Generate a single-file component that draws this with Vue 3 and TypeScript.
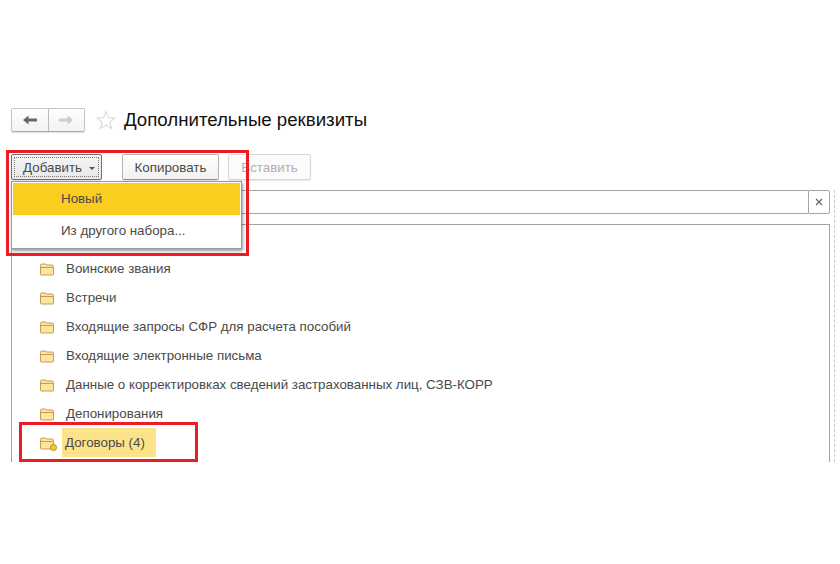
<script setup lang="ts">
const rows: string[] = [
  'Воинские звания',
  'Встречи',
  'Входящие запросы СФР для расчета пособий',
  'Входящие электронные письма',
  'Данные о корректировках сведений застрахованных лиц, СЗВ-КОРР',
  'Депонирования',
]
</script>

<template>
  <div class="page">
    <header class="head">
      <div class="nav">
        <button class="nav-btn">
          <svg width="16" height="12" viewBox="0 0 16 12"><path d="M1 6 L6.500 1.500 V4.500 H15 V7.500 H6.500 V10.500 Z" fill="#666" /></svg>
        </button>
        <button class="nav-btn off">
          <svg width="16" height="12" viewBox="0 0 16 12"><path d="M15 6 L9.500 1.500 V4.500 H1 V7.500 H9.500 V10.500 Z" fill="#ccc" /></svg>
        </button>
      </div>
      <svg class="star" width="20" height="20" viewBox="0 0 20 20">
        <path d="M10 1.500 L12.400 7.600 L18.900 8 L13.900 12.200 L15.500 18.500 L10 15 L4.500 18.500 L6.100 12.200 L1.100 8 L7.600 7.600 Z" fill="#fff" stroke="#dcdcdc" stroke-width="1.2" />
      </svg>
      <h1 class="title">Дополнительные реквизиты</h1>
    </header>

    <div class="toolbar">
      <div class="add-wrap">
        <button class="btn add"><span class="focus">Добавить<i class="caret"></i></span></button>
        <div class="menu">
          <div class="menu-item active">Новый</div>
          <div class="menu-item">Из другого набора...</div>
        </div>
      </div>
      <button class="btn copy">Копировать</button>
      <button class="btn paste">Вставить</button>
    </div>

    <div class="body">
      <div class="search">
        <div class="search-input"></div>
        <div class="search-clear">
          <svg width="8" height="8" viewBox="0 0 8 8"><path d="M1 1 L7 7 M7 1 L1 7" stroke="#666" stroke-width="1.2" /></svg>
        </div>
      </div>
      <div class="table">
        <div v-for="r in rows" :key="r" class="row">
          <svg class="folder" width="16" height="13" viewBox="0 0 16 13">
            <path d="M1.500 11 V2.500 Q1.500 1 3 1 H6 Q7 1 7.500 2 H13 Q14.500 2 14.500 3.500 V11 Q14.500 12 13.500 12 H2.500 Q1.500 12 1.500 11 Z" fill="#fce59c" stroke="#c9985a" />
            <path d="M2 4.500 H14" stroke="#c9985a" />
          </svg>
          <span class="label">{{ r }}</span>
        </div>
        <div class="row">
          <span class="folder-wrap">
            <svg class="folder" width="16" height="13" viewBox="0 0 16 13">
              <path d="M1.500 11 V2.500 Q1.500 1 3 1 H6 Q7 1 7.500 2 H13 Q14.500 2 14.500 3.500 V11 Q14.500 12 13.500 12 H2.500 Q1.500 12 1.500 11 Z" fill="#fce59c" stroke="#c9985a" />
              <path d="M2 4.500 H14" stroke="#c9985a" />
            </svg>
            <i class="dot"></i>
          </span>
          <span class="label hit">Договоры (4)</span>
        </div>
      </div>
    </div>

    <div class="mark mark-top"></div>
    <div class="mark mark-bottom"></div>
  </div>
</template>

<style>
html, body { margin: 0; background: #fff; }
</style>

<style scoped>
.page {
  position: relative;
  width: 840px;
  height: 564px;
  overflow: hidden;
  box-sizing: border-box;
  padding: 108px 0 0 11px;
  background: #fff;
  font-family: "Liberation Sans", Arial, sans-serif;
  font-size: 13.33px;
  color: #4a4a4a;
}
.head { display: flex; align-items: center; height: 24px; }
.nav {
  display: flex;
  width: 74px;
  height: 24px;
  box-sizing: border-box;
  border: 1px solid #c4c4c4;
  border-bottom-color: #aaa;
  border-radius: 2px;
  background: linear-gradient(#fff, #f2f2f2);
  box-shadow: 0 1px 1px rgba(0, 0, 0, 0.12);
}
.nav-btn {
  flex: 1;
  padding: 0;
  border: 0;
  background: none;
  display: flex;
  align-items: center;
  justify-content: center;
}
.nav-btn.off { border-left: 1px solid #bbb; }
.star { margin: 0 8px 0 11px; flex: none; }
.title { margin: 0; font-size: 18.67px; font-weight: 400; color: #111; line-height: 24px; }
.toolbar { display: flex; margin-top: 22px; height: 26px; }
.btn {
  height: 26px;
  box-sizing: border-box;
  padding: 0;
  border: 1px solid #b4b4b4;
  border-bottom-color: #8f8f8f;
  border-radius: 2px;
  background: linear-gradient(#fff, #f1f1f1);
  box-shadow: 0 1px 1px rgba(0, 0, 0, 0.1);
  font: 13.33px "Liberation Sans", Arial, sans-serif;
  color: #4a4a4a;
}
.add-wrap { position: relative; width: 91px; }
.add { width: 91px; border-color: #6f6f6f; display: block; padding: 2px; background: linear-gradient(#f4f4f4, #e8e8e8); }
.focus {
  display: flex;
  align-items: center;
  justify-content: center;
  height: 100%;
  padding-left: 5px;
  border: 1px dotted #777;
  box-sizing: border-box;
}
.caret {
  margin: 2px 0 0 7px;
  border: 3px solid transparent;
  border-top-color: #555;
  border-bottom: 0;
}
.copy { width: 97px; margin-left: 20px; }
.paste { width: 83px; margin-left: 9px; color: #b0b0b0; border-color: #d8d8d8; background: #fbfbfb; }
.menu {
  position: absolute;
  z-index: 2;
  left: 0;
  top: 27px;
  width: 231px;
  height: 68px;
  box-sizing: border-box;
  padding: 1px;
  border: 1px solid #9a9a9a;
  background: #fff;
  box-shadow: 1px 2px 3px rgba(0, 0, 0, 0.4);
}
.menu-item { height: 32px; line-height: 32px; padding-left: 48px; }
.menu-item.active { background: #fbcd1f; }
.body {
  width: 824px;
  height: 272px;
  margin-top: 10px;
  box-sizing: border-box;
  padding-right: 4px;
  border-right: 1px dashed #c8c8c8;
}
.search { display: flex; height: 24px; }
.search-input {
  flex: 1;
  border: 1px solid #a4a4a4;
  border-right: 0;
  border-radius: 2px 0 0 2px;
}
.search-clear {
  width: 20px;
  border: 1px solid #a4a4a4;
  border-radius: 0 2px 2px 0;
  display: flex;
  align-items: center;
  justify-content: center;
}
.table {
  height: 238px;
  margin-top: 10px;
  box-sizing: border-box;
  padding-top: 29px;
  border: 1px solid #a4a4a4;
  border-bottom: 0;
}
.row { display: flex; align-items: center; height: 29px; padding-left: 27px; }
.folder { flex: none; display: block; margin-top: 1px; }
.folder-wrap { position: relative; flex: none; }
.dot {
  position: absolute;
  right: -2px;
  bottom: -1px;
  width: 5px;
  height: 5px;
  border: 1px solid #b78e1c;
  border-radius: 50%;
  background: #f7c92c;
}
.label { margin-left: 11px; white-space: nowrap; }
.hit { margin-left: 7px; background: #fce38a; line-height: 29px; padding: 0 11px 0 3px; }
.mark { position: absolute; z-index: 3; box-sizing: border-box; border: 3px solid #ec1c24; pointer-events: none; }
.mark-top { left: 6px; top: 150px; width: 243px; height: 106px; }
.mark-bottom { left: 19px; top: 422px; width: 179px; height: 40px; }
</style>
